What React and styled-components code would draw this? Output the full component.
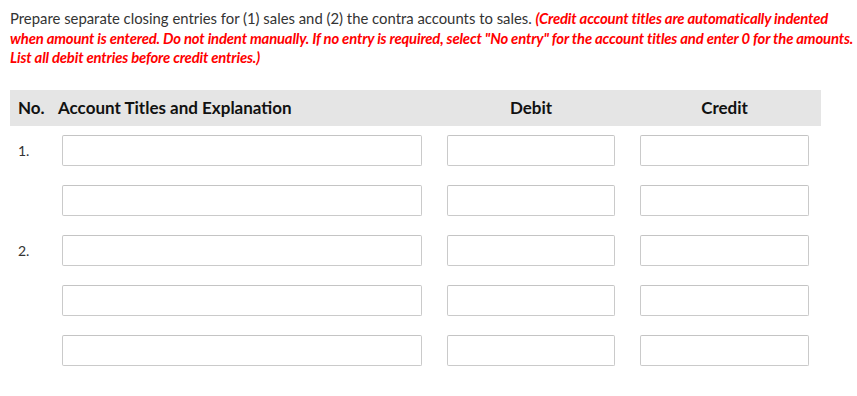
import React from "react";
import styled, { createGlobalStyle } from "styled-components";

const GlobalStyle = createGlobalStyle`
  body {
    margin: 0;
    background: #fff;
    font-family: Lato, "Open Sans", sans-serif;
    color: #333;
  }
`;

const Page = styled.div`
  padding: 9px 0 0 10px;
`;

const Prompt = styled.p`
  margin: 0;
  font-size: 14.85px;
  line-height: 19.5px;
  color: #333;
  white-space: nowrap;
`;

const Warning = styled.em`
  color: #f00;
  font-weight: 700;
  letter-spacing: -0.17px;
`;

const Table = styled.div`
  margin-top: 22px;
  display: grid;
  grid-template-columns: 48px 376px 194px 193px;
`;

const HeadCell = styled.div`
  background: #e5e5e5;
  height: 36px;
  display: flex;
  align-items: center;
  justify-content: ${({ $center }) => ($center ? "center" : "flex-start")};
  padding-left: ${({ $pad }) => $pad || 0}px;
  font-size: 17px;
  font-weight: 700;
  color: #111;
`;

const NumCell = styled.div`
  display: flex;
  align-items: center;
  padding-left: 8px;
  height: 31px;
  margin-top: ${({ $first }) => ($first ? 9 : 19)}px;
  font-size: 14px;
  color: #333;
`;

const FieldCell = styled.div`
  display: flex;
  justify-content: ${({ $center }) => ($center ? "center" : "flex-start")};
  padding-left: ${({ $pad }) => $pad || 0}px;
  margin-top: ${({ $first }) => ($first ? 9 : 19)}px;
`;

const Field = styled.input`
  box-sizing: border-box;
  width: ${({ $w }) => $w}px;
  height: 31px;
  border: 1px solid #cacaca;
  border-top-color: #c4c4c4;
  border-radius: 2px;
  background: #fff;
  margin: 0;
  padding: 0 6px;
  font-family: inherit;
  font-size: 14px;
  outline: none;
`;

const rows = ["1.", "", "2.", "", ""];

export default function App() {
  return (
    <>
      <GlobalStyle />
      <Page>
        <Prompt>
          Prepare separate closing entries for (1) sales and (2) the contra
          accounts to sales.{" "}
          <Warning>
            (Credit account titles are automatically indented
            <br />
            when amount is entered. Do not indent manually. If no entry is
            required, select "No entry" for the account titles and enter 0 for
            the amounts.
            <br />
            List all debit entries before credit entries.)
          </Warning>
        </Prompt>

        <Table>
          <HeadCell $pad={8}>No.</HeadCell>
          <HeadCell>Account Titles and Explanation</HeadCell>
          <HeadCell $center>Debit</HeadCell>
          <HeadCell $center>Credit</HeadCell>

          {rows.map((label, i) => (
            <React.Fragment key={i}>
              <NumCell $first={i === 0}>{label}</NumCell>
              <FieldCell $first={i === 0} $pad={4}>
                <Field $w={360} />
              </FieldCell>
              <FieldCell $first={i === 0} $center>
                <Field $w={168} />
              </FieldCell>
              <FieldCell $first={i === 0} $center>
                <Field $w={169} />
              </FieldCell>
            </React.Fragment>
          ))}
        </Table>
      </Page>
    </>
  );
}
